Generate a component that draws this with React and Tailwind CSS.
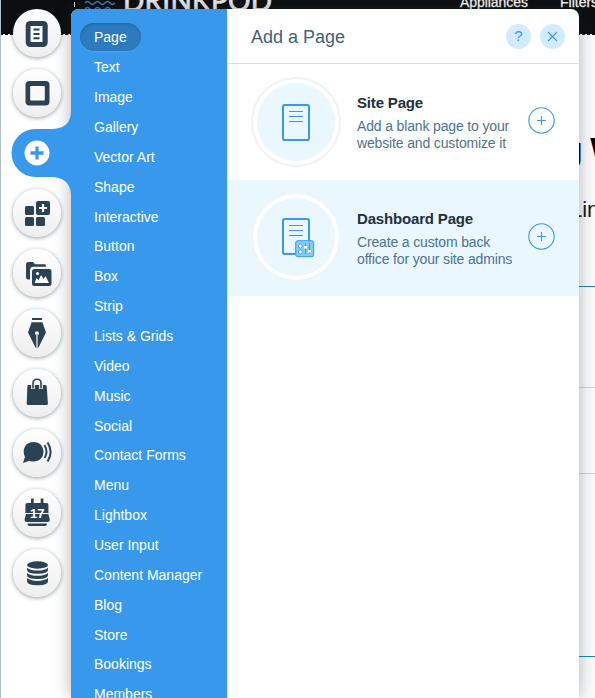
const categories = [
  'Page', 'Text', 'Image', 'Gallery', 'Vector Art', 'Shape', 'Interactive', 'Button',
  'Box', 'Strip', 'Lists & Grids', 'Video', 'Music', 'Social', 'Contact Forms', 'Menu',
  'Lightbox', 'User Input', 'Content Manager', 'Blog', 'Store', 'Bookings', 'Members',
];

const ink = '#2b4254';

const Icon = ({ children }) => (
  <svg width="48" height="48" viewBox="0 0 48 48" fill={ink} className="block">
    {children}
  </svg>
);

const PagesIcon = () => (
  <Icon>
    <rect x="12.7" y="12" width="22" height="26" rx="4.5" />
    <rect x="17.5" y="17" width="12" height="16" fill="#fafafa" />
    <path d="M20.500 20.500h6M20.500 25h6M20.500 29.300h6" stroke={ink} strokeWidth="1.900" />
  </Icon>
);

const BackgroundIcon = () => (
  <Icon>
    <rect x="12.500" y="12" width="24" height="24.500" rx="4" />
    <rect x="17.200" y="17" width="14.600" height="14.600" rx="0.800" fill="#fafafa" />
  </Icon>
);

const AppsIcon = () => (
  <Icon>
    <rect x="12" y="17" width="9" height="9" rx="1.500" />
    <rect x="12" y="28" width="9" height="9" rx="1.500" />
    <rect x="23" y="28" width="9" height="9" rx="1.500" />
    <rect x="23" y="12" width="14" height="14" rx="2" />
    <path d="M26 19h8M30 15v8" stroke="#fff" strokeWidth="2.200" />
  </Icon>
);

const MediaIcon = () => (
  <Icon>
    <path d="M13 15.500Q13 13 15.500 13H20l2 2.200h9.500q1.400 0 1.400 1.300v1.300H20.500q-3.500 0-3.500 3.400V30.500h-1.500Q13 30.500 13 28z" />
    <rect x="19" y="20" width="19.500" height="17" rx="2.500" />
    <path d="M21.700 34l1.800-5 2 2.300 2.600-5.300 2.400 4 2-3L36 34z" fill="#fff" />
    <circle cx="24.500" cy="24.500" r="1.600" fill="#fff" />
  </Icon>
);

const BlogPenIcon = () => (
  <Icon>
    <path d="M19 9h10v2H19zM18.600 13.200h10.800L33 23.500 25.500 38.500h-3L15 23.500z" />
    <circle cx="24" cy="24.200" r="2" fill="#fff" />
    <path d="M24 25v13.500" stroke="#b5bfc7" strokeWidth="1.800" />
  </Icon>
);

const StoreIcon = () => (
  <Icon>
    <path d="M15.500 16h17q1 0 1.200 1l1.200 17.500q0 1.500-1.500 1.500H15.200q-1.500 0-1.500-1.500L14.400 17q.1-1 1.100-1z" />
    <path d="M20 20v-6q0-3.600 4-3.600t4 3.600v6" fill="none" stroke="#fff" strokeWidth="3.600" />
    <path d="M20 19.500V14q0-3.800 4-3.800t4 3.800v5.500" fill="none" stroke={ink} strokeWidth="1.600" />
  </Icon>
);

const ChatIcon = () => (
  <Icon>
    <path d="M20.500 13c5.900 0 10 4.200 10 9.800s-4.100 9.800-10 9.800c-1.600 0-2.800-.3-4-.9L10 34l2-6.300c-.9-1.500-1.300-3.100-1.300-4.900C10.700 17.200 14.600 13 20.500 13z" />
    <path d="M31.500 16q4 7 0 13M34.500 13.500q6.300 9.500 0 19" fill="none" stroke={ink} strokeWidth="2" />
  </Icon>
);

const CalendarIcon = () => (
  <Icon>
    <path d="M18 9.500h2.700V14h7V9.500h2.700V14h3q2 0 2 2v8h-23v-8q0-2 2-2H18zM13 25h22.400l1.400 5.500q.3 2.500-2 2.500H13.600q-2.300 0-2-2.500zM14.500 34.500h19.400v.5q0 2-2 2H16.500q-2 0-2-2z" />
    <text x="24.200" y="29" textAnchor="middle" fontFamily="Liberation Sans, Arial, sans-serif" fontWeight="700" fontSize="13" fill="#fff">17</text>
  </Icon>
);

const DatabaseIcon = () => (
  <Icon>
    <ellipse cx="24.500" cy="16" rx="10.500" ry="3.700" />
    <path d="M14 18.700q3 2.800 10.500 2.800T35 18.700v2.100q0 4-10.500 4t-10.500-4zM14 23.900q3 2.800 10.500 2.800T35 23.900V26q0 4-10.500 4T14 26zM14 29.100q3 2.800 10.500 2.800T35 29.100v3.200q0 4-10.500 4t-10.500-4z" />
  </Icon>
);

const tools = [
  PagesIcon, BackgroundIcon, null, AppsIcon, MediaIcon, BlogPenIcon,
  StoreIcon, ChatIcon, CalendarIcon, DatabaseIcon,
];

const AddTab = () => (
  <svg width="60" height="84" viewBox="0 0 60 84" className="-my-[18px] ml-[11px] block shrink-0">
    <path d="M60 0c0 13-8 18-20 18H24.500a24 24 0 0 0 0 48H40c12 0 20 6 20 18z" fill="#3899ec" />
    <circle cx="26" cy="42" r="12.500" fill="#fff" />
    <path d="M19.500 42h13M26 35.500v13" stroke="#3899ec" strokeWidth="3.300" />
  </svg>
);

const Toolbar = () => (
  <nav className="flex w-[71px] shrink-0 flex-col gap-3 border-l border-[#b3bfcb] pt-[9px]">
    {tools.map((Tool, i) =>
      Tool ? (
        <button
          key={i}
          className="ml-3 size-12 shrink-0 rounded-full bg-linear-to-b from-white to-[#eeeeef] shadow-[0_1px_4px_rgba(22,45,61,0.48)]"
        >
          <Tool />
        </button>
      ) : (
        <div key={i} className="-ml-px flex h-12 shrink-0 items-center">
          <AddTab />
        </div>
      ),
    )}
  </nav>
);

const SitePreview = () => (
  <div className="absolute inset-0 flex flex-col overflow-hidden bg-white">
    <div className="flex h-[34px] shrink-0 bg-[#0d0e0f]">
      <svg width="595" height="34" className="shrink-0">
        <path d="M74.500 2v5" stroke="#ddd" />
        <path d="M85 3q2.500-3 5 0t5 0 5 0 5 0 5 0 5 0M85 9q2.500-3 5 0t5 0 5 0 5 0 5 0 5 0" fill="none" stroke="#3b83c4" strokeWidth="1.300" />
        <text x="123" y="10.500" fontFamily="Lato, sans-serif" fontSize="28" fill="#eee" stroke="#eee" strokeWidth="0.700" textLength="149">DRINKPOD</text>
        <g fontFamily="Liberation Sans, Arial, sans-serif" fontSize="14" fill="#fff" stroke="#fff" strokeWidth="0.250">
          <text x="460" y="7" textLength="68">Appliances</text>
          <text x="560" y="7">Filters</text>
        </g>
      </svg>
    </div>
    <div className="h-px shrink-0 border-t border-dashed border-[#0d0e0f]" />
    <div className="ml-[500px] flex-1 bg-[#fcfcfc] font-['Liberation_Sans',Arial,sans-serif] text-[#17181a]">
      <div className="h-[251px] overflow-hidden pt-[92px] pl-[62px]">
        <p className="text-[34px] leading-[44px] font-bold tracking-[-1px] whitespace-nowrap text-black">g W</p>
        <p className="mt-[25px] pl-[8px] text-[22px] leading-[28px] whitespace-nowrap">Lin</p>
      </div>
      <div className="h-[101px] border-t border-[#1687bd]" />
      <div className="h-[86px] border-t border-[#cfd3d7]" />
      <div className="h-[183px] border-t border-[#cfd3d7]" />
      <div className="border-t border-[#1687bd]" />
    </div>
  </div>
);

const SheetOutline = () => (
  <>
    <rect x="1" y="1" width="26" height="35" rx="1.800" fill="none" stroke="#3899ec" strokeWidth="2" />
    <path d="M7 7.500h14M7 12.500h14M7 17.500h14" stroke="#3899ec" />
  </>
);

const SitePageIcon = () => (
  <svg width="28" height="37" viewBox="0 0 28 37" className="block">
    <SheetOutline />
  </svg>
);

const DashboardPageIcon = () => (
  <svg width="28" height="37" viewBox="0 0 28 37" className="block overflow-visible">
    <SheetOutline />
    <rect x="13.700" y="22.700" width="18" height="16" rx="2" fill="#7fccf7" stroke="#3899ec" />
    <g fill="#fff" stroke="#3899ec" strokeWidth="0.800">
      <circle cx="18.300" cy="28" r="2" />
      <circle cx="18.300" cy="34" r="2" />
    </g>
    <path d="M23.500 25v11M27.500 25v11" stroke="#3899ec" />
    <path d="M22 28h3v2.500h-3zM26 32h3v2.500h-3z" fill="#fff" />
  </svg>
);

const AddButton = ({ highlighted }) => (
  <button className={highlighted ? 'mr-6 shrink-0' : 'mr-6 shrink-0 pb-[4px]'}>
    <svg width="27" height="27" viewBox="0 0 27 27" fill="none" stroke="#3899ec" className="block">
      <circle cx="13.500" cy="13.500" r="12.700" strokeWidth="1.100" />
      <path d="M9 13.500h9M13.500 9v9" strokeWidth="1.100" />
    </svg>
  </button>
);

const Option = ({ title, lines, icon, highlighted }) => (
  <div className={highlighted ? 'flex h-[116px] items-center bg-[#eaf7ff] pb-[3px]' : 'flex h-[116px] items-center'}>
    <div
      className={
        highlighted
          ? 'ml-[25px] flex size-[88px] shrink-0 items-center justify-center rounded-full border border-[#f0f3f5] bg-white'
          : 'ml-[24px] mr-[-1px] flex size-[90px] shrink-0 items-center justify-center rounded-full border-2 border-[#eff3f6] bg-white'
      }
    >
      <div className="flex size-[78px] items-center justify-center rounded-full bg-[#eaf7ff]">{icon}</div>
    </div>
    <div className={highlighted ? 'ml-[17px] flex-1 pt-[4px] whitespace-nowrap' : 'ml-[17px] flex-1 pt-[2px] whitespace-nowrap'}>
      <h3 className="text-[15px] leading-[18px] font-bold tracking-[-0.17px] text-[#20303c]">{title}</h3>
      <p className="mt-[6px] text-[14px] leading-[17px] tracking-[-0.150px] text-[#4d7390]">
        {lines[0]}
        <br />
        {lines[1]}
      </p>
    </div>
    <AddButton highlighted={highlighted} />
  </div>
);

const AddPanel = () => (
  <section className="mt-[9px] flex h-[689px] w-[508px] shrink-0 overflow-hidden rounded-t-lg bg-white shadow-[0_0_18px_rgba(22,45,61,0.350)]">
    <ul className="flex w-[156px] shrink-0 flex-col bg-[#3899ec] pt-[13px] text-[14px] text-white">
      {categories.map((name, i) => (
        <li key={name} className="flex h-[29.860px] shrink-0 items-center pl-[9px]">
          <span
            className={
              i === 0
                ? 'flex h-7 items-center rounded-full bg-[#2d7bbf] px-[14px] pt-[2px] shadow-[inset_0_1px_3px_rgba(20,70,120,0.450),0_1px_1px_rgba(255,255,255,0.120)]'
                : 'px-[14px] pt-[2px]'
            }
          >
            {name}
          </span>
        </li>
      ))}
    </ul>
    <div className="flex w-[352px] flex-col">
      <header className="flex h-[55px] shrink-0 items-center border-b border-[#d5dfe8] pl-6 pr-[14px] pt-px">
        <h2 className="flex-1 pt-[2px] text-[18px] leading-[27px] text-[#41617c]">Add a Page</h2>
        <button className="flex size-[25px] items-center justify-center rounded-full bg-[#d3ebff] text-[15px] text-[#3899ec]">?</button>
        <button className="ml-[9px] flex size-[25px] items-center justify-center rounded-full bg-[#d3ebff]">
          <svg width="11" height="11" viewBox="0 0 11 11" stroke="#3899ec" strokeWidth="1.100">
            <path d="M1 1l9 9M10 1l-9 9" />
          </svg>
        </button>
      </header>
      <Option title="Site Page" lines={['Add a blank page to your', 'website and customize it']} icon={<SitePageIcon />} />
      <Option title="Dashboard Page" lines={['Create a custom back', 'office for your site admins']} icon={<DashboardPageIcon />} highlighted />
    </div>
  </section>
);

export default function App() {
  return (
    <main className="relative h-[698px] w-[595px] overflow-hidden font-['Liberation_Sans',Arial,sans-serif]">
      <SitePreview />
      <div className="relative flex">
        <div className="relative z-10 flex w-[71px] shrink-0">
          <Toolbar />
        </div>
        <AddPanel />
      </div>
    </main>
  );
}
